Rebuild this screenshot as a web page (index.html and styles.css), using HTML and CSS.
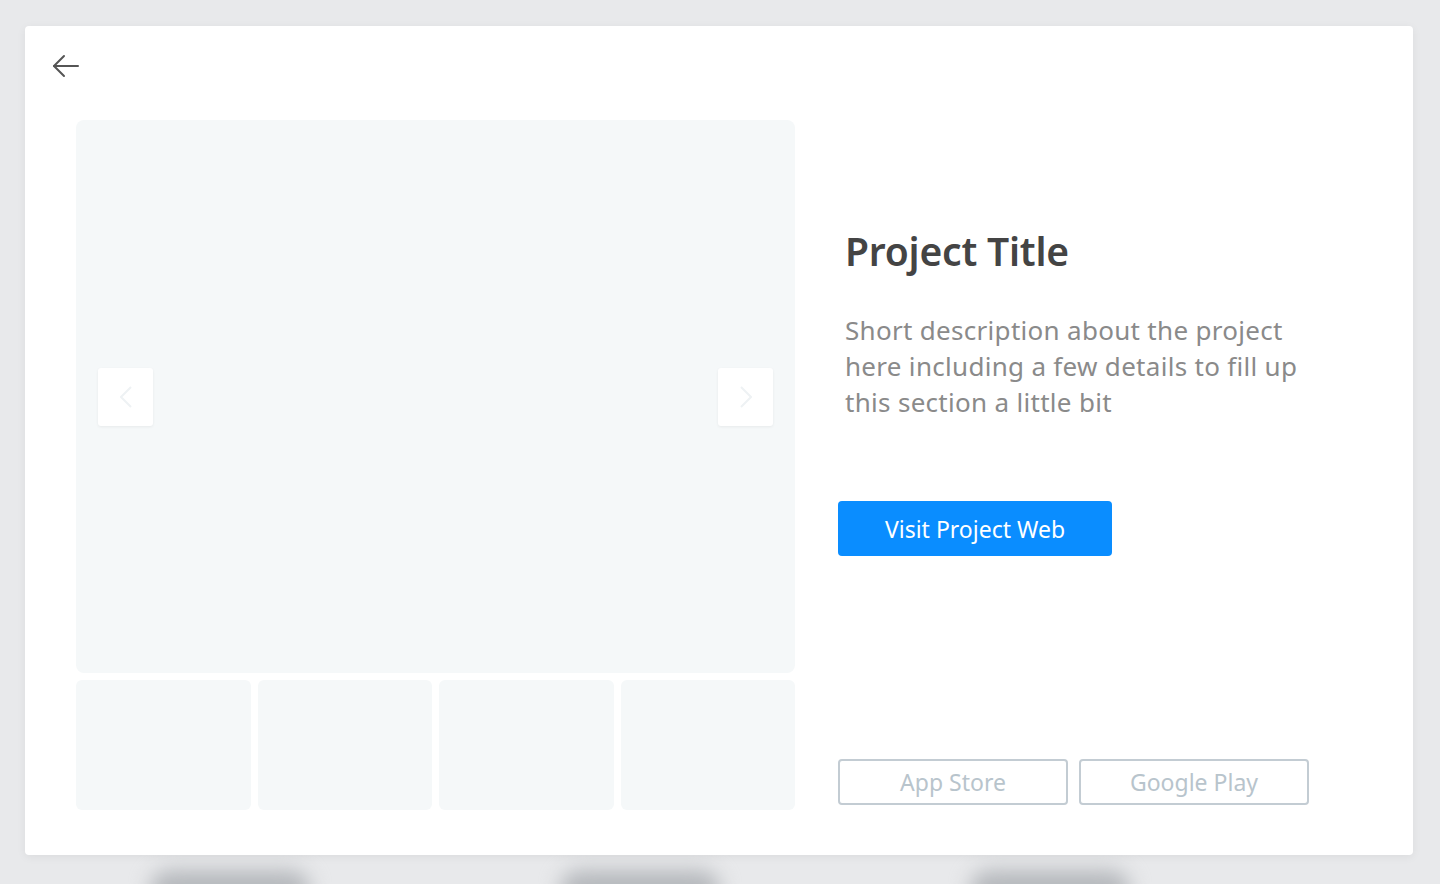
FILE: index.html
```html
<!DOCTYPE html>
<html lang="en">
<head>
<meta charset="utf-8">
<title>Project</title>
<link rel="stylesheet" href="styles.css">
</head>
<body>
<div class="backdrop">
  <div class="ghost"></div>
  <div class="ghost"></div>
  <div class="ghost"></div>
</div>
<div class="modal">
  <button class="back" aria-label="Back">
    <svg width="28" height="24" viewBox="0 0 28 24" fill="none" stroke="#555" stroke-width="2" stroke-linecap="round" stroke-linejoin="round"><path d="M26 12H2"/><path d="M12 2L2 12l10 10"/></svg>
  </button>
  <div class="content">
    <div class="gallery">
      <div class="main-image">
        <button class="nav" aria-label="Previous">
          <svg width="12" height="22" viewBox="0 0 12 22" fill="none" stroke="#eef2f4" stroke-width="2"><path d="M11 1L1 11l10 10"/></svg>
        </button>
        <button class="nav" aria-label="Next">
          <svg width="12" height="22" viewBox="0 0 12 22" fill="none" stroke="#eef2f4" stroke-width="2"><path d="M1 1l10 10L1 21"/></svg>
        </button>
      </div>
      <div class="thumbs">
        <div class="thumb"></div>
        <div class="thumb"></div>
        <div class="thumb"></div>
        <div class="thumb"></div>
      </div>
    </div>
    <div class="info">
      <div class="text">
        <h1 class="title">Project Title</h1>
        <p class="desc">Short description about the project here including a few details to fill up this section a little bit</p>
      </div>
      <a class="visit" href="#">Visit Project Web</a>
      <div class="stores">
        <a class="store" href="#">App Store</a>
        <a class="store" href="#">Google Play</a>
      </div>
    </div>
  </div>
</div>
</body>
</html>
```

FILE: styles.css
```css
* { box-sizing: border-box; }
html, body { margin: 0; height: 100%; }
body {
  background: #e8e9eb;
  font-family: "Noto Sans", "Open Sans", sans-serif;
  overflow: hidden;
  position: relative;
  padding: 26px 27px 0 25px;
}
.backdrop {
  position: absolute;
  left: 0; right: 0; top: 850px;
  height: 60px;
  display: flex;
  gap: 250px;
  padding-left: 150px;
}
.ghost {
  width: 160px;
  height: 40px;
  margin-top: 20px;
  background: #b5b8bc;
  filter: blur(10px);
  border-radius: 20px;
}
.modal {
  position: relative;
  background: #fff;
  border-radius: 4px;
  box-shadow: 0 2px 10px rgba(0,0,0,0.06);
  height: 829px;
  width: 1388px;
  padding: 28px 104px 45px 51px;
  display: flex;
  flex-direction: column;
}
.back {
  position: absolute;
  left: 27px;
  top: 28px;
  background: none;
  border: 0;
  padding: 0;
  width: 28px;
  height: 24px;
  cursor: pointer;
}
.content {
  margin-top: 66px;
  display: flex;
  gap: 43px;
  flex: 1;
}
.gallery {
  flex: none;
  width: 719px;
  display: flex;
  flex-direction: column;
  gap: 7px;
}
.main-image {
  height: 553px;
  background: #f5f8f9;
  border-radius: 8px;
  display: flex;
  align-items: center;
  justify-content: space-between;
  padding: 0 22px;
}
.nav {
  width: 55px;
  height: 58px;
  background: #fff;
  border: 0;
  border-radius: 3px;
  box-shadow: 0 1px 3px rgba(0,0,0,0.06);
  display: flex;
  align-items: center;
  justify-content: center;
  padding: 0;
}
.thumbs {
  display: grid;
  grid-template-columns: repeat(4, 1fr);
  gap: 7px;
  height: 130px;
}
.thumb {
  background: #f5f8f9;
  border-radius: 6px;
}
.info {
  flex: 1;
  min-width: 0;
  display: flex;
  flex-direction: column;
  align-items: flex-start;
  padding-top: 103px;
}
.text { padding-left: 7px; }
.title {
  margin: 0;
  font-size: 39px;
  font-weight: 600;
  color: #444;
  line-height: 56px;
  letter-spacing: -0.2px;
}
.desc {
  margin: 33px 0 0;
  font-size: 26px;
  line-height: 36px;
  color: #8a8a8a;
  width: 464px;
  letter-spacing: 0.3px;
}
.visit {
  margin-top: 81px;
  width: 274px;
  height: 55px;
  background: #0a8dff;
  color: #fff;
  border-radius: 4px;
  display: flex;
  align-items: center;
  justify-content: center;
  text-decoration: none;
  font-size: 23px;
}
.stores {
  margin-top: auto;
  margin-bottom: 5px;
  display: flex;
  gap: 11px;
}
.store {
  width: 230px;
  height: 46px;
  border: 2px solid #c3ccd3;
  border-radius: 4px;
  color: #b8c4cc;
  font-size: 23px;
  display: flex;
  align-items: center;
  justify-content: center;
  text-decoration: none;
}
```
